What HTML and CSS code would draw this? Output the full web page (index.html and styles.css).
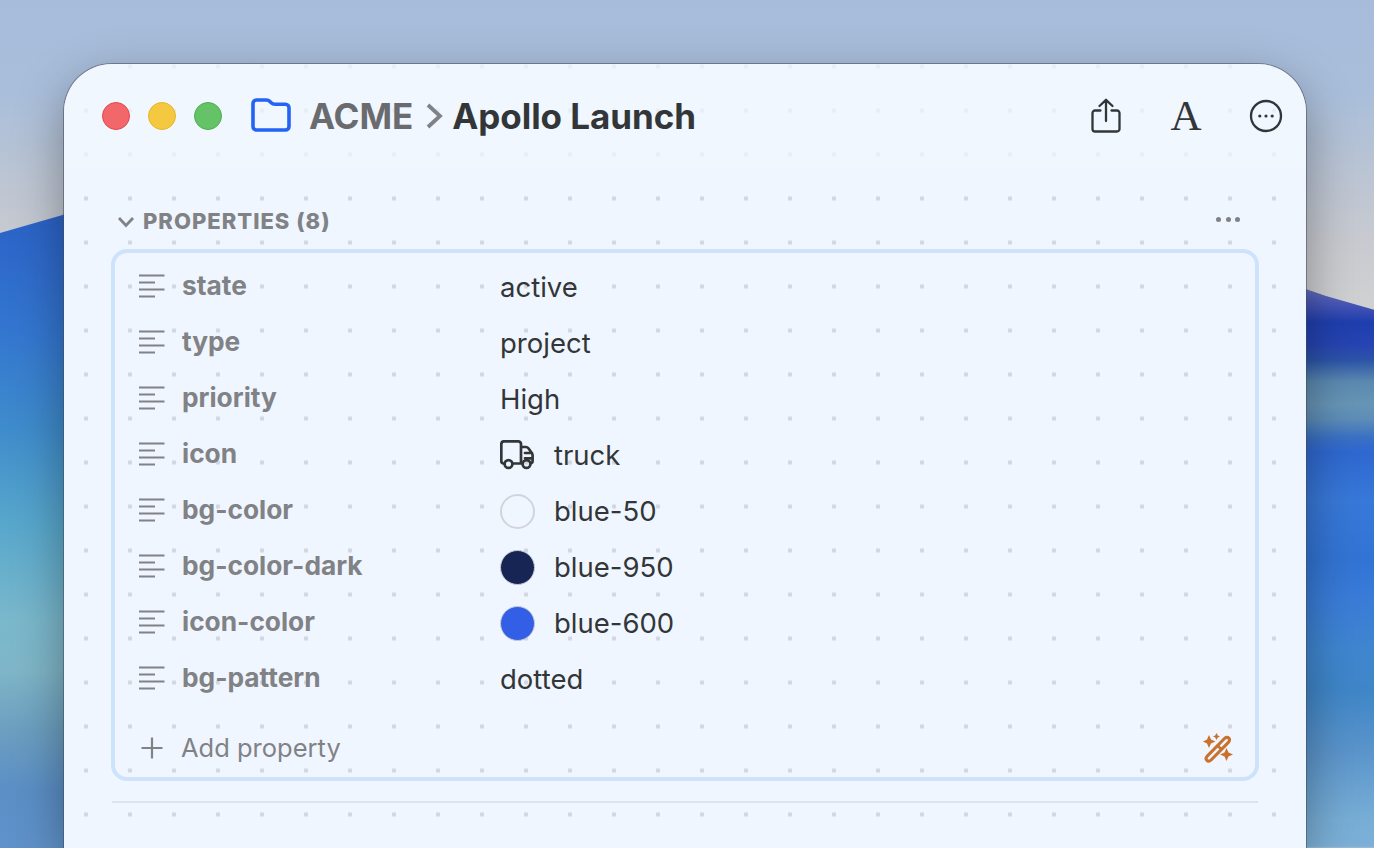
FILE: index.html
```html
<!DOCTYPE html>
<html lang="en">
<head>
<meta charset="utf-8">
<title>Apollo Launch</title>
<link rel="stylesheet" href="styles.css">
</head>
<body>
<div class="wall wall-left"></div>
<div class="wall wall-right"></div>
<svg width="0" height="0" class="defs">
  <symbol id="lines" viewBox="0 0 26 24">
    <path d="M0 1.5H25.5M0 8.5H16M0 15.5H25.5M0 22.5H16" fill="none" stroke="#808285" stroke-width="1.8"/>
  </symbol>
</svg>
<main class="window">
  <header class="titlebar">
    <div class="lights">
      <span class="light red"></span><span class="light yellow"></span><span class="light green"></span>
    </div>
    <svg class="folder" width="40" height="34" viewBox="0 0 40 34"><path d="M2 5.5A3.5 3.5 0 0 1 5.500 2H15.500C17 2 18 2.600 19 3.600L20.500 5C21.500 6 22.500 6.200 24 6.200H34.500A3.500 3.500 0 0 1 38 9.700V28.500A3.500 3.500 0 0 1 34.500 32H5.500A3.500 3.500 0 0 1 2 28.500Z" fill="none" stroke="#2563f5" stroke-width="3.600" stroke-linejoin="round"/></svg>
    <h1 class="crumbs"><span class="crumb-parent">ACME</span><svg class="crumb-sep" width="18" height="26" viewBox="0 0 18 26"><path d="M3 2L15 13L3 24" fill="none" stroke="#808285" stroke-width="3.800"/></svg><span class="crumb-current">Apollo Launch</span></h1>
    <div class="tools">
      <span class="tool"><svg width="30" height="36" viewBox="0 0 30 36"><path d="M9.500 12.500H4A2.500 2.500 0 0 0 1.500 15V31A2.500 2.500 0 0 0 4 33.500H26A2.500 2.500 0 0 0 28.500 31V15A2.500 2.500 0 0 0 26 12.500H20.500M15 23V2M8.500 8L15 1.800L21.500 8" fill="none" stroke="#333638" stroke-width="2.300" stroke-linecap="round" stroke-linejoin="round"/></svg></span>
      <span class="tool tool-font">A</span>
      <span class="tool"><svg width="34" height="34" viewBox="0 0 34 34"><circle cx="17" cy="17" r="15" fill="none" stroke="#333638" stroke-width="2.300"/><circle cx="10.800" cy="17" r="1.600" fill="#333638"/><circle cx="17" cy="17" r="1.600" fill="#333638"/><circle cx="23.200" cy="17" r="1.600" fill="#333638"/></svg></span>
    </div>
  </header>
  <section class="section">
    <div class="section-head">
      <svg class="chev" width="18" height="12" viewBox="0 0 18 12"><path d="M2 2L9 9.500L16 2" fill="none" stroke="#808285" stroke-width="2.800"/></svg>
      <span class="section-title">PROPERTIES (8)</span>
      <span class="section-more"><i></i><i></i><i></i></span>
    </div>
    <div class="props">
      <div class="row"><div class="key"><svg class="key-icon"><use href="#lines"/></svg>state</div><div class="val">active</div></div>
      <div class="row"><div class="key"><svg class="key-icon"><use href="#lines"/></svg>type</div><div class="val">project</div></div>
      <div class="row"><div class="key"><svg class="key-icon"><use href="#lines"/></svg>priority</div><div class="val">High</div></div>
      <div class="row"><div class="key"><svg class="key-icon"><use href="#lines"/></svg>icon</div><div class="val"><svg class="truck" width="34" height="30" viewBox="0 0 34 30"><path d="M4.500 23.500H3.500A2.500 2.500 0 0 1 1.300 21V4A3 3 0 0 1 4.300 1.300H18A3 3 0 0 1 21 4V23.500H12.500M21 7H26C27 7 27.800 7.500 28.400 8.300L31.800 13C32.300 13.600 32.600 14.400 32.600 15.200V21A2.500 2.500 0 0 1 30.500 23.500M21 23.500H22.500M25 13H32M25 18.300H32.600" fill="none" stroke="#333638" stroke-width="2.700" stroke-linecap="round" stroke-linejoin="round"/><circle cx="8.500" cy="24" r="3.900" fill="none" stroke="#333638" stroke-width="2.700"/><circle cx="26.500" cy="24" r="3.900" fill="none" stroke="#333638" stroke-width="2.700"/></svg>truck</div></div>
      <div class="row"><div class="key"><svg class="key-icon"><use href="#lines"/></svg>bg-color</div><div class="val"><span class="swatch s50"></span>blue-50</div></div>
      <div class="row"><div class="key"><svg class="key-icon"><use href="#lines"/></svg>bg-color-dark</div><div class="val"><span class="swatch s950"></span>blue-950</div></div>
      <div class="row"><div class="key"><svg class="key-icon"><use href="#lines"/></svg>icon-color</div><div class="val"><span class="swatch s600"></span>blue-600</div></div>
      <div class="row"><div class="key"><svg class="key-icon"><use href="#lines"/></svg>bg-pattern</div><div class="val">dotted</div></div>
      <div class="add">
        <svg class="plus" width="22" height="22" viewBox="0 0 22 22"><path d="M11 0.500V21.500M0.500 11H21.500" fill="none" stroke="#808285" stroke-width="2.200"/></svg>
        <span class="add-label">Add property</span>
        <svg class="wand" width="30" height="30" viewBox="0 0 30 30"><path d="M4.200 23.200L21.500 5.500C22.800 4.200 24.700 4 25.800 5.100C26.900 6.200 26.700 8.100 25.400 9.400L8.100 27C6.800 28.300 5 28.500 3.900 27.400C2.800 26.300 3 24.500 4.200 23.200Z" fill="none" stroke="#c9722e" stroke-width="3.100" stroke-linejoin="round"/><path d="M6 2L8 6.500L12.500 8.500L8 10.500L6 15L4 10.500L0 8.500L4 6.500Z M13.500 0L14.800 2.400L17 3.500L14.800 4.600L13.500 7L12.200 4.600L10 3.500L12.200 2.400Z M23.500 15L25.500 19.500L30 21.500L25.500 23.500L23.500 28L21.500 23.500L17 21.500L21.500 19.500Z" fill="#c9722e"/><path d="M14.500 12.500L19 17" stroke="#c9722e" stroke-width="2.600" fill="none"/></svg>
      </div>
    </div>
    <hr class="divider">
  </section>
</main>
</body>
</html>
```
FILE: styles.css
```css
html, body {
  margin: 0;
  height: 848px;
  overflow: hidden;
}

body {
  position: relative;
  font-family: Inter, "Liberation Sans", sans-serif;
  background: linear-gradient(180deg, #a6bcda 0, #a9bedb 90px, #bcc5d3 180px, #c8cad0 240px, #d2d2d2 320px);
}

.defs {
  position: absolute;
}

.wall {
  position: absolute;
  top: 0;
  bottom: 0;
}

.wall-left {
  left: 0;
  width: 80px;
  clip-path: polygon(0 233px, 80px 210px, 80px 100%, 0 100%);
  background: linear-gradient(180deg, #2c64c8 225px, #3376d0 330px, #3f8ccc 430px, #56a6cc 520px, #7ab8cc 620px, #7fb6c8 670px, #6c9fc0 730px, #5b8fc6 790px, #5f92ca 848px);
}

.wall-right {
  right: -4px;
  width: 84px;
  clip-path: polygon(0 285px, 32px 296px, 84px 311px, 84px 100%, 0 100%);
  filter: blur(1px);
  background: linear-gradient(180deg, #6a74be 285px, #4454b6 306px, #1f3fae 322px, #2744b2 345px, #2c54a8 360px, #5b8ab0 382px, #6795b6 405px, #5c8cb8 420px, #3a70c4 438px, #2f68d0 452px, #3878d8 500px, #3274d4 560px, #3a7cd8 600px, #3f86d0 650px, #3f86c8 690px, #5a94cb 750px, #78aed6 820px, #7db0d8 848px);
}

.window {
  position: relative;
  box-sizing: border-box;
  width: 1242px;
  height: 784px;
  margin: 64px 0 0 64px;
  border-radius: 48px 48px 0 0;
  background-color: #f0f6ff;
  background-image: radial-gradient(circle, #d3d6de 0, #d3d6de 2px, transparent 2.600px);
  background-size: 44px 44px;
  background-position: 0 -19.500px;
  box-shadow: 0 0 0 1px rgba(70, 75, 90, .55), 0 18px 50px rgba(0, 0, 0, .36);
}

.titlebar {
  display: flex;
  align-items: center;
  height: 104px;
  padding: 0 17px 0 38px;
  border-radius: 48px 48px 0 0;
  background: rgba(240, 246, 255, .72);
}

.lights {
  display: flex;
  gap: 18px;
}

.light {
  box-sizing: border-box;
  width: 28px;
  height: 28px;
  border-radius: 50%;
  border: 1px solid transparent;
}

.red { background: #f1676a; border-color: #e3484c; }
.yellow { background: #f4c83f; border-color: #eab524; }
.green { background: #64c366; border-color: #4bb04e; }

.folder {
  margin: -2px 0 0 29px;
}

.crumbs {
  display: flex;
  align-items: center;
  margin: 0 0 0 18px;
  font-size: 35px;
  font-weight: 700;
  letter-spacing: -.05px;
}

.crumb-parent { color: #696b6e; }
.crumb-sep { margin: 0 9px 0 12px; }
.crumb-current { color: #333638; }

.tools {
  display: flex;
  align-items: center;
  margin-left: auto;
  gap: 34px;
}

.tool {
  display: flex;
  align-items: center;
  justify-content: center;
  width: 46px;
  height: 40px;
  color: #333638;
}

.tool-font {
  font-family: "Liberation Serif", serif;
  font-size: 43px;
  line-height: 40px;
}

.section {
  padding: 38px 48px 0;
}

.section-head {
  display: flex;
  align-items: center;
  height: 30px;
  margin-bottom: 13px;
  padding-left: 5px;
}

.chev {
  margin-top: 2px;
}

.section-title {
  margin-left: 8px;
  color: #808285;
  font-size: 22px;
  font-weight: 800;
  letter-spacing: 1px;
}

.section-more {
  display: flex;
  gap: 4.500px;
  margin: -4px 18px 0 auto;
}

.section-more i {
  width: 5px;
  height: 5px;
  border-radius: 50%;
  background: #808285;
}

.props {
  box-sizing: border-box;
  height: 532px;
  margin: 0 -1px;
  padding-top: 6px;
  border: 4px solid #cde2fb;
  border-radius: 16px;
}

.row {
  display: grid;
  grid-template-columns: 380px 1fr;
  align-items: center;
  height: 56px;
  padding-left: 24px;
}

.key {
  display: flex;
  align-items: center;
  gap: 17px;
  margin-top: -4px;
  color: #808285;
  font-size: 26.300px;
  font-weight: 700;
}

.key-icon {
  width: 26px;
  height: 24px;
  flex: none;
  margin-top: 2px;
}

.val {
  display: flex;
  align-items: center;
  margin-left: -19px;
  color: #333638;
  font-size: 27.500px;
  font-weight: 400;
}

.truck {
  margin-right: 20px;
}

.swatch {
  box-sizing: border-box;
  width: 35px;
  height: 35px;
  margin: 0 19.500px 0 -.500px;
  border-radius: 50%;
}

.s50 { background: #eff6ff; border: 2px solid #d2d4da; }
.s950 { background: #172554; border: 1px solid #c8ccd8; }
.s600 { background: #335fe6; border: 1px solid #c8ccd8; }

.add {
  display: flex;
  align-items: center;
  height: 56px;
  margin-top: 13px;
  padding: 0 22px 0 26px;
}

.add-label {
  margin: -2px 0 0 18px;
  color: #808285;
  font-size: 25.500px;
}

.wand {
  margin-left: auto;
}

.divider {
  height: 2px;
  margin: 20px 0 0;
  border: 0;
  background: #dfe3ec;
}
```
